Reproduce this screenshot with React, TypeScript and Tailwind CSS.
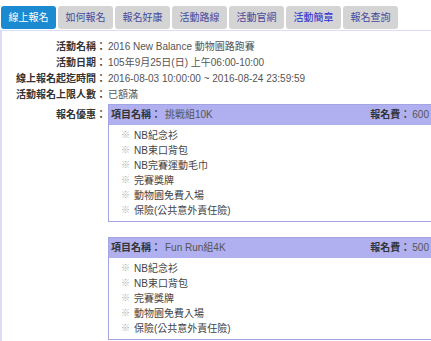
const TABS = ["線上報名", "如何報名", "報名好康", "活動路線", "活動官網", "活動簡章", "報名查詢"];

const INFO: [string, string][] = [
  ["活動名稱", "2016 New Balance 動物園路跑賽"],
  ["活動日期", "105年9月25日(日) 上午06:00-10:00"],
  ["線上報名起迄時間", "2016-08-03 10:00:00 ~ 2016-08-24 23:59:59"],
  ["活動報名上限人數", "已額滿"],
];

type Item = { name: string; fee: string; gifts: string[] };

const ITEMS: Item[] = [
  {
    name: "挑戰組10K",
    fee: "600",
    gifts: ["NB紀念衫", "NB束口背包", "NB完賽運動毛巾", "完賽獎牌", "動物園免費入場", "保險(公共意外責任險)"],
  },
  {
    name: "Fun Run組4K",
    fee: "500",
    gifts: ["NB紀念衫", "NB束口背包", "完賽獎牌", "動物園免費入場", "保險(公共意外責任險)"],
  },
];

function ItemBox({ item }: { item: Item }) {
  return (
    <div className="w-[326px] border border-[#a4a4e2]">
      <div className="flex h-[20px] items-center justify-between bg-[#b0b0f0] pl-[2px] pr-[4px]">
        <div className="flex items-center">
          <span className="font-bold text-[#333]">項目名稱：</span>
          <span className="ml-[4px] text-[#555]">{item.name}</span>
        </div>
        <div className="flex items-center">
          <span className="font-bold text-[#333]">報名費：</span>
          <span className="ml-[2px] text-[#555]">{item.fee}</span>
        </div>
      </div>
      <ul className="bg-white py-[3px]">
        {item.gifts.map((g) => (
          <li key={g} className="flex h-[15px] items-center pl-[12px]">
            <span className="w-[13px] text-[9px] text-[#aaa]">※</span>
            <span className="text-[#444]">{g}</span>
          </li>
        ))}
      </ul>
    </div>
  );
}

export default function App() {
  return (
    <div
      className="h-[341px] w-[431px] overflow-hidden bg-white text-[10px] leading-none"
      style={{ fontFamily: '"Liberation Sans", "Noto Sans CJK TC", sans-serif' }}
    >
      <div className="flex gap-[2px] pl-[1px] pt-[6px]">
        {TABS.map((t, i) => (
          <div
            key={t}
            className={
              i === 0
                ? "flex h-[23px] w-[55px] items-center justify-center rounded-[3px] bg-[#1b8ad0] text-white"
                : i === 5
                  ? "flex h-[23px] w-[55px] items-center justify-center rounded-[3px] bg-[#d4d4d4] text-[#2a2ad0]"
                  : "flex h-[23px] w-[55px] items-center justify-center rounded-[3px] bg-[#d4d4d4] text-[#4a4a9e]"
            }
          >
            {t}
          </div>
        ))}
      </div>
      <div className="mt-[1px] h-full border-l-2 border-t border-[#dcdcf4] pt-[8px]">
        {INFO.map(([label, value]) => (
          <div key={label} className="flex h-[16px] items-center">
            <div className="w-[104px] shrink-0 text-right font-bold text-[#333]">{label}：</div>
            <div className="ml-[2px] whitespace-nowrap text-[#555]">{value}</div>
          </div>
        ))}
        <div className="mt-[1px] flex">
          <div className="flex h-[22px] w-[104px] shrink-0 items-center justify-end font-bold text-[#333]">
            報名優惠：
          </div>
          <div className="ml-[2px] flex flex-col gap-[15px]">
            {ITEMS.map((it) => (
              <ItemBox key={it.name} item={it} />
            ))}
          </div>
        </div>
      </div>
    </div>
  );
}
